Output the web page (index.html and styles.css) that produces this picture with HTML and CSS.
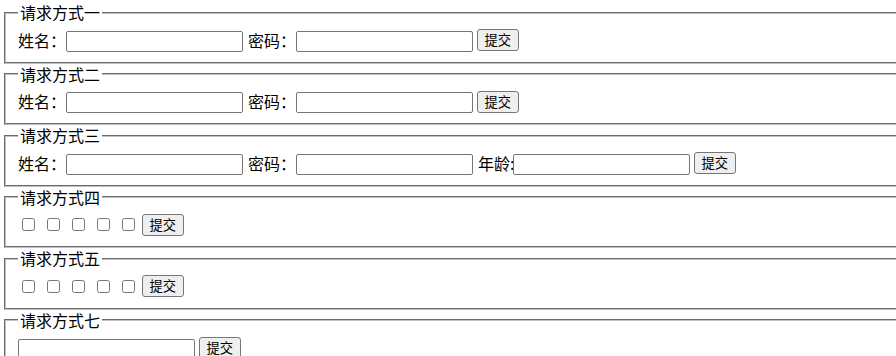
FILE: index.html
```html
<!DOCTYPE html>
<html lang="zh-CN">
<head>
    <meta charset="UTF-8">
    <meta name="viewport" content="width=device-width, initial-scale=1.0">
    <title>请求方式</title>
    <link rel="stylesheet" href="styles.css">
</head>
<body>

    <!-- 方式一 -->
    <form class="req-form" action="#" method="get">
        <fieldset class="req-box">
            <legend>请求方式一</legend>
            <div class="row">
                <label class="field">姓名：<input type="text" name="username"></label>
                <label class="field">密码：<input type="text" name="password"></label>
                <input type="submit" value="提交">
            </div>
        </fieldset>
    </form>

    <!-- 方式二 -->
    <form class="req-form" action="#" method="post">
        <fieldset class="req-box">
            <legend>请求方式二</legend>
            <div class="row">
                <label class="field">姓名：<input type="text" name="username"></label>
                <label class="field">密码：<input type="text" name="password"></label>
                <input type="submit" value="提交">
            </div>
        </fieldset>
    </form>

    <!-- 方式三 -->
    <form class="req-form" action="#" method="post">
        <fieldset class="req-box">
            <legend>请求方式三</legend>
            <div class="row">
                <label class="field">姓名：<input type="text" name="username"></label>
                <label class="field">密码：<input type="text" name="password"></label>
                <label class="field">年龄<span class="colon">:</span><input type="text" name="age"></label>
                <input type="submit" value="提交">
            </div>
        </fieldset>
    </form>

    <!-- 方式四 -->
    <form class="req-form" action="#" method="get">
        <fieldset class="req-box">
            <legend>请求方式四</legend>
            <div class="row">
                <input type="checkbox" name="hobby" value="1">
                <input type="checkbox" name="hobby" value="2">
                <input type="checkbox" name="hobby" value="3">
                <input type="checkbox" name="hobby" value="4">
                <input type="checkbox" name="hobby" value="5">
                <input type="submit" value="提交">
            </div>
        </fieldset>
    </form>

    <!-- 方式五 -->
    <form class="req-form" action="#" method="post">
        <fieldset class="req-box">
            <legend>请求方式五</legend>
            <div class="row">
                <input type="checkbox" name="hobby" value="1">
                <input type="checkbox" name="hobby" value="2">
                <input type="checkbox" name="hobby" value="3">
                <input type="checkbox" name="hobby" value="4">
                <input type="checkbox" name="hobby" value="5">
                <input type="submit" value="提交">
            </div>
        </fieldset>
    </form>

    <!-- 方式七 -->
    <form class="req-form" action="#" method="post">
        <fieldset class="req-box">
            <legend>请求方式七</legend>
            <div class="row">
                <input type="text" name="content">
                <input type="submit" value="提交">
            </div>
        </fieldset>
    </form>

</body>
</html>
```

FILE: styles.css
```css
/* 页面 */
html {
    overflow: hidden;
}

body {
    font-family: "Noto Sans CJK SC", "Liberation Sans", sans-serif;
    font-size: 16px;
    line-height: 21px;
    color: #000;
    background-color: #fff;
    margin: 2px -40px 0 2px;
}

.req-form {
    margin: 0;
}

/* 分组框 */
.req-box {
    margin: 0 2px;
    padding: 5.6px 12px 10px;
    border: 2px groove rgb(192, 192, 192);
}

.req-box legend {
    padding: 0 2px;
    line-height: 21px;
}

/* 每一行 */
.row {
    display: flex;
    align-items: center;
    gap: 5px;
    height: 23px;
}

.field {
    display: flex;
    align-items: center;
    white-space: nowrap;
}

.colon {
    width: 3px;
}

/* 输入框 */
input[type="text"] {
    box-sizing: border-box;
    width: 177px;
    height: 21px;
    margin: 0;
    padding: 1px 2px;
    border: 1px solid #767676;
    border-radius: 2px;
    font-size: 13.33px;
    align-self: flex-end;
}

.field input[type="text"] {
    margin-top: 2px;
}

input[type="checkbox"] {
    width: 13px;
    height: 13px;
    margin: 3px 3px 3px 4px;
}

/* 提交按钮 */
input[type="submit"] {
    box-sizing: border-box;
    height: 22px;
    margin: 0 0 0 -1.5px;
    padding: 1px 7px;
    font-family: "Noto Sans CJK SC", sans-serif;
    font-size: 13.33px;
    line-height: 18px;
    color: #000;
    background-color: #efefef;
    border: 1px solid #767676;
    border-radius: 3px;
}
```
